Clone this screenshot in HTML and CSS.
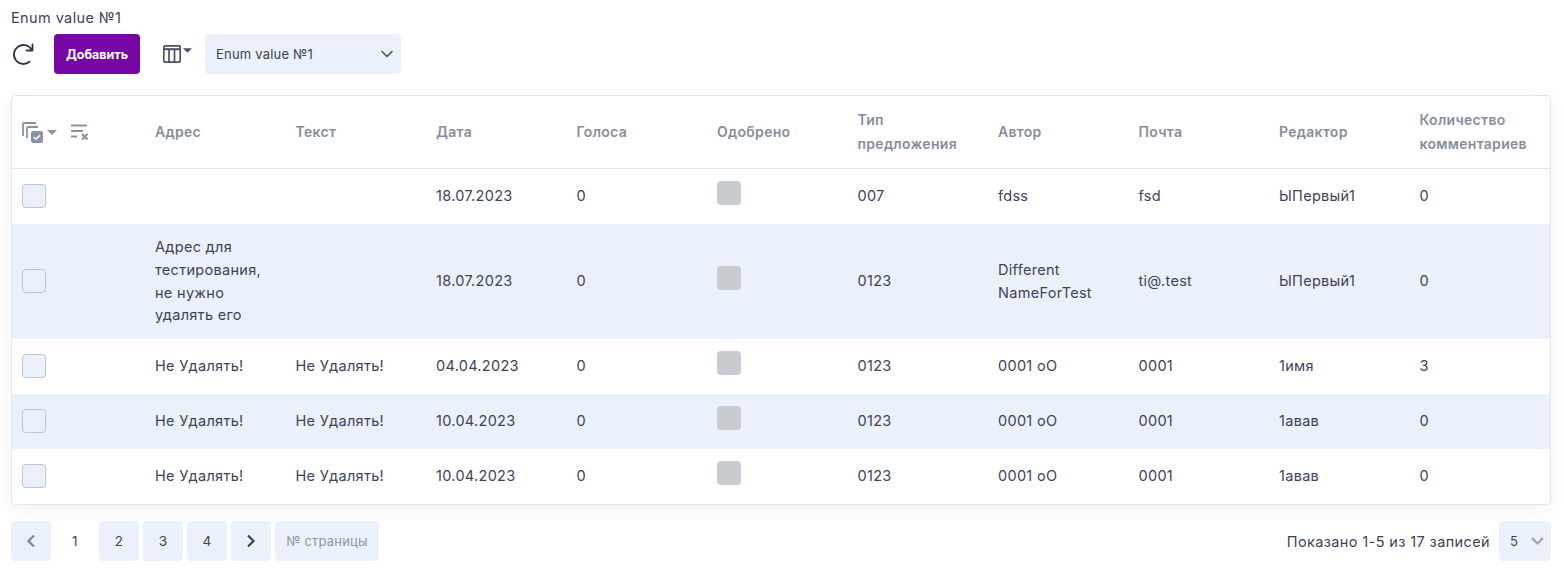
FILE: index.html
```html
<!DOCTYPE html>
<html lang="ru">
<head>
    <meta charset="UTF-8">
    <title>Предложения</title>
    <link rel="stylesheet" href="styles.css">
</head>
<body>

<div class="page-title">Enum value №1</div>

<div class="toolbar">
    <button class="icon-btn refresh" type="button" aria-label="Обновить">
        <svg width="24" height="24" viewBox="0 0 24 24" fill="none" stroke="#2f3447" stroke-width="1.800" stroke-linecap="round" stroke-linejoin="round">
            <path d="M19.500 7.500A9.500 9.500 0 1 0 17.500 19.800"/>
            <path d="M20.500 2.500v6h-6"/>
        </svg>
    </button>
    <button class="add-btn" type="button">Добавить</button>
    <button class="icon-btn columns" type="button" aria-label="Колонки">
        <svg width="18" height="18" viewBox="0 0 18 18" fill="none" stroke="#4b5162" stroke-width="1.700">
            <rect x="0.800" y="0.800" width="16.400" height="16.400" rx="1.500"/>
            <path d="M0.800 4.200h16.400" stroke-width="2"/>
            <path d="M6 4v13M11.500 4v13"/>
        </svg>
        <svg class="caret" width="9" height="5" viewBox="0 0 10 5"><path d="M0 0h10L5 5z" fill="#4b5162"/></svg>
    </button>
    <div class="enum-select">
        <span>Enum value №1</span>
        <svg width="12" height="8" viewBox="0 0 12 8" fill="none" stroke="#4b5162" stroke-width="1.600" stroke-linecap="round" stroke-linejoin="round"><path d="M1 1.500l5 5 5-5"/></svg>
    </div>
</div>

<div class="card">
    <table class="grid">
        <thead>
            <tr>
                <th class="tools-cell">
                    <div class="tools">
                        <svg width="21" height="21" viewBox="0 0 21 21" fill="none">
                            <path d="M1 14V2a1 1 0 0 1 1-1h12" stroke="#8a93a1" stroke-width="1.800"/>
                            <path d="M5 16V6a1 1 0 0 1 1-1h10" stroke="#8a93a1" stroke-width="1.800"/>
                            <rect x="9" y="9" width="12" height="12" rx="2" fill="#8a93a1"/>
                            <path d="M11.800 15l2.200 2.200 4-4" stroke="#fff" stroke-width="1.600"/>
                        </svg>
                        <svg class="tools-caret" width="10" height="5" viewBox="0 0 10 5"><path d="M0 0h10L5 5z" fill="#8a93a1"/></svg>
                        <svg class="tools-clear" width="18" height="16" viewBox="0 0 18 16" fill="none" stroke="#8a93a1" stroke-width="1.900">
                            <path d="M0 1.500h16M0 7h12M0 12.500h6"/>
                            <path d="M11 10l5.500 5.500M16.500 10L11 15.500" stroke-width="2.200"/>
                        </svg>
                    </div>
                </th>
                <th>Адрес</th>
                <th>Текст</th>
                <th>Дата</th>
                <th>Голоса</th>
                <th>Одобрено</th>
                <th>Тип предложения</th>
                <th>Автор</th>
                <th>Почта</th>
                <th>Редактор</th>
                <th>Количество комментариев</th>
            </tr>
        </thead>
        <tbody>
            <tr>
                <td><span class="check"></span></td>
                <td></td>
                <td></td>
                <td>18.07.2023</td>
                <td>0</td>
                <td><span class="approved"></span></td>
                <td>007</td>
                <td>fdss</td>
                <td>fsd</td>
                <td>ЫПервый1</td>
                <td>0</td>
            </tr>
            <tr>
                <td><span class="check"></span></td>
                <td>Адрес для тестирования, не нужно удалять его</td>
                <td></td>
                <td>18.07.2023</td>
                <td>0</td>
                <td><span class="approved"></span></td>
                <td>0123</td>
                <td>Different NameForTest</td>
                <td>ti@.test</td>
                <td>ЫПервый1</td>
                <td>0</td>
            </tr>
            <tr>
                <td><span class="check"></span></td>
                <td>Не Удалять!</td>
                <td>Не Удалять!</td>
                <td>04.04.2023</td>
                <td>0</td>
                <td><span class="approved"></span></td>
                <td>0123</td>
                <td>0001 оО</td>
                <td>0001</td>
                <td>1имя</td>
                <td>3</td>
            </tr>
            <tr>
                <td><span class="check"></span></td>
                <td>Не Удалять!</td>
                <td>Не Удалять!</td>
                <td>10.04.2023</td>
                <td>0</td>
                <td><span class="approved"></span></td>
                <td>0123</td>
                <td>0001 оО</td>
                <td>0001</td>
                <td>1авав</td>
                <td>0</td>
            </tr>
            <tr>
                <td><span class="check"></span></td>
                <td>Не Удалять!</td>
                <td>Не Удалять!</td>
                <td>10.04.2023</td>
                <td>0</td>
                <td><span class="approved"></span></td>
                <td>0123</td>
                <td>0001 оО</td>
                <td>0001</td>
                <td>1авав</td>
                <td>0</td>
            </tr>
        </tbody>
    </table>
</div>

<div class="footer">
    <div class="pager">
        <a class="page-btn arrow-off">
            <svg width="10" height="14" viewBox="0 0 10 14" fill="none" stroke="#7f8796" stroke-width="2.200"><path d="M8 1.500L2.500 7 8 12.500"/></svg>
        </a>
        <a class="page-btn current">1</a>
        <a class="page-btn">2</a>
        <a class="page-btn">3</a>
        <a class="page-btn">4</a>
        <a class="page-btn">
            <svg width="10" height="14" viewBox="0 0 10 14" fill="none" stroke="#3d4357" stroke-width="2.200"><path d="M2 1.500L7.500 7 2 12.500"/></svg>
        </a>
        <a class="page-btn page-input">№ страницы</a>
    </div>
    <div class="summary">
        <span>Показано 1-5 из 17 записей</span>
        <div class="size-select">
            <span>5</span>
            <svg width="13" height="8" viewBox="0 0 13 8" fill="none" stroke="#9aa1ad" stroke-width="2"><path d="M1 1l5.500 5.500L12 1"/></svg>
        </div>
    </div>
</div>

</body>
</html>
```

FILE: styles.css
```css
body {
    font-family: "Inter", "Noto Sans", Arial, sans-serif;
    font-size: 14.5px;
    letter-spacing: 0.3px;
    color: #3d4357;
    background-color: #fff;
    margin: 0;
    padding: 9px 13px 0 11px;
}

button {
    font-family: inherit;
    letter-spacing: inherit;
    border: none;
    background: none;
    padding: 0;
    cursor: pointer;
}

.page-title {
    font-size: 14.5px;
    letter-spacing: 0.4px;
    line-height: 17px;
}

.toolbar {
    display: flex;
    align-items: center;
    height: 40px;
    margin-top: 8px;
}

.icon-btn {
    display: flex;
    align-items: center;
}

.refresh {
    margin-left: 1px;
    width: 42px;
}

.add-btn {
    width: 86px;
    height: 40px;
    background-color: #7606a5;
    color: #fff;
    font-size: 12.5px;
    font-weight: 700;
    letter-spacing: 0;
    border-radius: 4px;
}

.columns {
    margin-left: 23px;
    width: 42px;
    gap: 2px;
}

.columns .caret {
    margin-bottom: 7px;
}

.enum-select {
    display: flex;
    align-items: center;
    justify-content: space-between;
    width: 196px;
    height: 40px;
    box-sizing: border-box;
    padding: 0 8px 0 11px;
    background-color: #ebf1fb;
    border-radius: 4px;
    font-size: 13px;
    letter-spacing: 0.2px;
}

.card {
    margin-top: 21px;
    border: 1px solid #e4e6e8;
    border-radius: 4px;
    box-shadow: 0 4px 16px rgba(60, 70, 90, 0.07);
    overflow: hidden;
}

.grid {
    width: 100%;
    border-collapse: separate;
    border-spacing: 0;
    table-layout: fixed;
}

.grid th {
    height: 73px;
    padding: 0 10px;
    box-sizing: border-box;
    text-align: left;
    font-size: 14px;
    font-weight: 600;
    line-height: 24px;
    color: #868e9c;
    border-bottom: 1px solid #e4e6e8;
}

.grid th:first-child,
.grid td:first-child {
    width: 133px;
}

.grid td {
    height: 55px;
    padding: 12px 10px;
    box-sizing: border-box;
    line-height: 22.75px;
}

.grid tbody tr:nth-child(even) {
    background-color: #ebf1fb;
}

.tools {
    display: flex;
    align-items: center;
}

.tools-caret {
    margin-left: 4px;
}

.tools-clear {
    margin-left: 14px;
}

.check {
    display: block;
    width: 24px;
    height: 24px;
    margin-bottom: 1px;
    box-sizing: border-box;
    background-color: #ebf1fb;
    border: 1px solid #bcc4cf;
    border-radius: 4px;
}

.approved {
    display: block;
    width: 24px;
    height: 24px;
    margin-bottom: 7px;
    background-color: #c8ccd1;
    border-radius: 4px;
}

.footer {
    display: flex;
    align-items: center;
    justify-content: space-between;
    margin-top: 16px;
}

.pager {
    display: flex;
    gap: 4px;
}

.page-btn {
    display: flex;
    align-items: center;
    justify-content: center;
    width: 40px;
    height: 40px;
    background-color: #ebf1fb;
    border-radius: 4px;
    font-size: 13.5px;
}

.page-btn.current {
    background-color: transparent;
}

.page-input {
    width: 104px;
    font-size: 13px;
    letter-spacing: 0.2px;
    color: #8f96a3;
}

.summary {
    display: flex;
    align-items: center;
    gap: 9px;
    letter-spacing: 0.38px;
}

.size-select {
    display: flex;
    align-items: center;
    justify-content: space-between;
    width: 52px;
    height: 40px;
    box-sizing: border-box;
    padding: 0 7px 0 11px;
    background-color: #ebf1fb;
    border-radius: 4px;
    font-size: 13px;
}
```
